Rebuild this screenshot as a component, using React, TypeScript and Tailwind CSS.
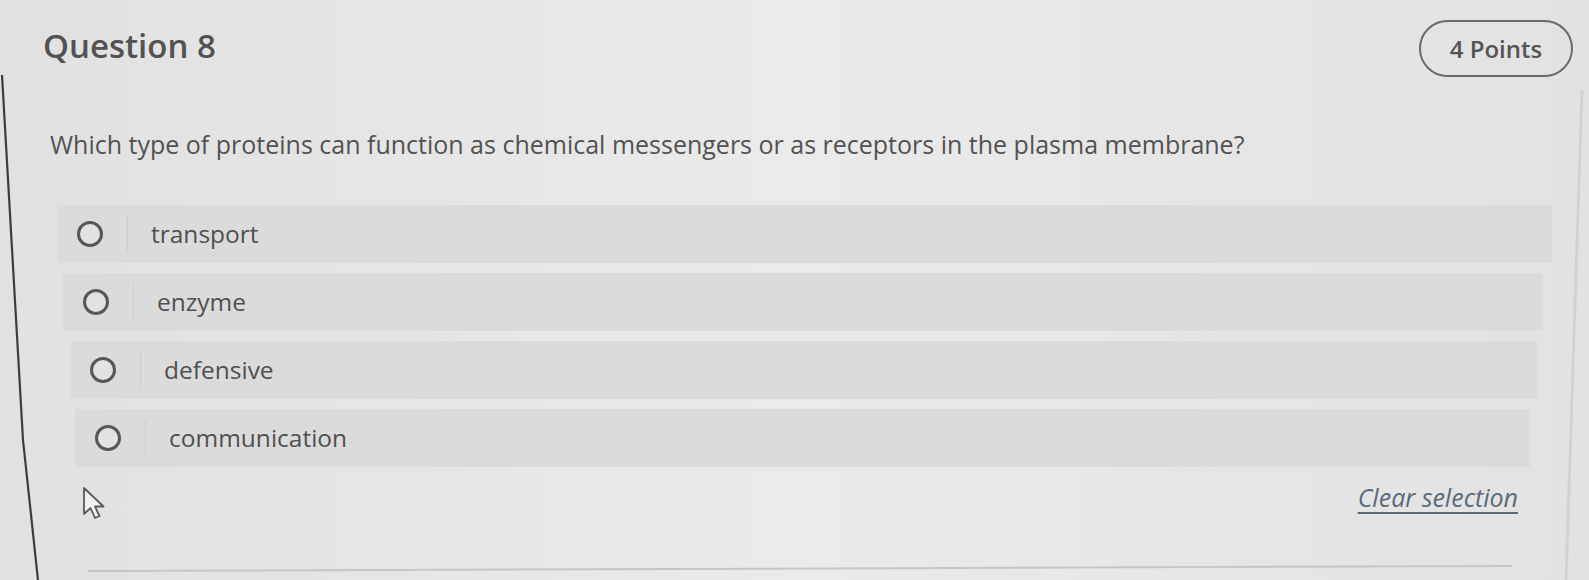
import React from "react";

const options = [
  { label: "transport", cls: "ml-[57px] w-[1495px]" },
  { label: "enzyme", cls: "ml-[63px] w-[1480px]" },
  { label: "defensive", cls: "ml-[70px] w-[1467px]" },
  { label: "communication", cls: "ml-[75px] w-[1455px]" },
];

export default function App() {
  return (
    <div
      className="relative w-[1589px] h-[580px] overflow-hidden bg-gradient-to-r from-[#e1e1e1] via-[#eaeaea] to-[#e2e2e2] text-[#4d4d4d]"
      style={{ fontFamily: '"Open Sans", "Noto Sans", sans-serif' }}
    >
      <svg className="absolute left-0 top-0 pointer-events-none" width="1589" height="580">
        <path d="M2 75 L23 440 L38 580" fill="none" stroke="#3c3c3c" strokeWidth="2.2" />
        <line x1="1582" y1="90" x2="1566" y2="580" stroke="#d2d2d2" strokeWidth="3" />
        <line x1="88" y1="571" x2="1512" y2="566" stroke="#c6c6c6" strokeWidth="2" />
      </svg>

      <div className="flex items-start justify-between pl-[43px] pr-[16px] pt-[26px]">
        <h1 className="text-[33px] leading-[40px] font-semibold text-[#525252]">Question 8</h1>
        <div className="mt-[-6px] flex h-[57px] w-[154px] items-center justify-center rounded-full border-2 border-[#6a6a6a] text-[24px] font-semibold text-[#555555]">
          4 Points
        </div>
      </div>

      <p className="ml-[50px] mt-[50px] text-[25px] leading-[34px] text-[#525252]">
        Which type of proteins can function as chemical messengers or as receptors in the plasma membrane?
      </p>

      <div className="mt-[44px] flex flex-col gap-[10px]">
        {options.map((o) => (
          <div key={o.label} className={`${o.cls} flex h-[58px] items-center bg-[#dbdbdb]`}>
            <span className="ml-[20px] h-[26px] w-[26px] shrink-0 rounded-full border-[3.5px] border-[#575757] bg-[#e2e2e2]" />
            <span className="ml-[24px] h-[36px] w-px shrink-0 bg-[#cdcdcd]" />
            <span className="ml-[23px] text-[24.5px] text-[#505050]">{o.label}</span>
          </div>
        ))}
      </div>

      <div className="relative flex items-start justify-end pr-[71px] pt-[13px]">
        <svg className="absolute left-[81px] top-[19px]" width="30" height="36" viewBox="0 0 30 36">
          <path
            d="M3 2 L3 28 L9.5 22 L14 32 L18.5 30 L14 20.5 L22.5 20.5 Z"
            fill="#f2f2f2"
            stroke="#5a5a5a"
            strokeWidth="1.8"
            strokeLinejoin="round"
          />
        </svg>
        <a className="text-[25px] leading-[34px] italic text-[#5b6a79] underline decoration-[1.5px] underline-offset-[5px]">
          Clear selection
        </a>
      </div>
    </div>
  );
}
